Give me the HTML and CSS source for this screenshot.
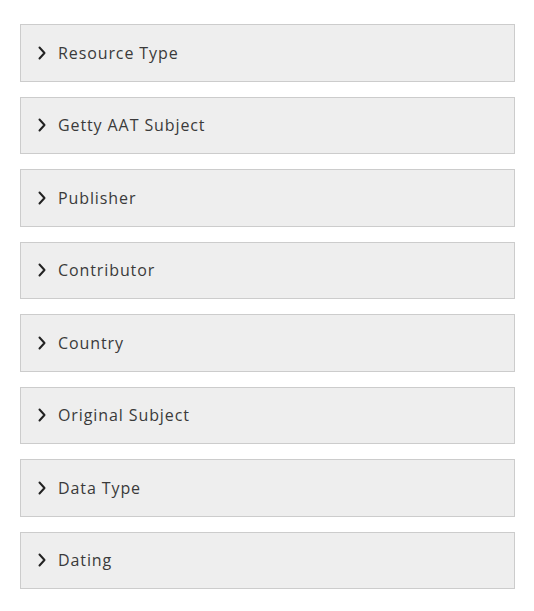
FILE: index.html
```html
<!DOCTYPE html>
<html>
<head>
<meta charset="utf-8">
<link rel="stylesheet" href="styles.css">
</head>
<body>
<div class="facets">
  <div class="facet"><svg class="chev" viewBox="0 0 10 14"><polyline points="2.5,1.5 7.5,7 2.5,12.5"/></svg><span>Resource Type</span></div>
  <div class="facet"><svg class="chev" viewBox="0 0 10 14"><polyline points="2.5,1.5 7.5,7 2.5,12.5"/></svg><span>Getty AAT Subject</span></div>
  <div class="facet"><svg class="chev" viewBox="0 0 10 14"><polyline points="2.5,1.5 7.5,7 2.5,12.5"/></svg><span>Publisher</span></div>
  <div class="facet"><svg class="chev" viewBox="0 0 10 14"><polyline points="2.5,1.5 7.5,7 2.5,12.5"/></svg><span>Contributor</span></div>
  <div class="facet"><svg class="chev" viewBox="0 0 10 14"><polyline points="2.5,1.5 7.5,7 2.5,12.5"/></svg><span>Country</span></div>
  <div class="facet"><svg class="chev" viewBox="0 0 10 14"><polyline points="2.5,1.5 7.5,7 2.5,12.5"/></svg><span>Original Subject</span></div>
  <div class="facet"><svg class="chev" viewBox="0 0 10 14"><polyline points="2.5,1.5 7.5,7 2.5,12.5"/></svg><span>Data Type</span></div>
  <div class="facet"><svg class="chev" viewBox="0 0 10 14"><polyline points="2.5,1.5 7.5,7 2.5,12.5"/></svg><span>Dating</span></div>
</div>
</body>
</html>
```

FILE: styles.css
```css
html, body {
  margin: 0;
  padding: 0;
  background: #fff;
}
.facets {
  display: flex;
  flex-direction: column;
  gap: 15px;
  padding: 24px 19px 0 20px;
  font-family: "Open Sans", "DejaVu Sans", sans-serif;
}
.facet {
  box-sizing: border-box;
  height: 57.5px;
  display: flex;
  align-items: center;
  padding-left: 16px;
  background: #eeeeee;
  border: 1px solid #cccccc;
  color: #3a3a3a;
  font-size: 16px;
  letter-spacing: 0.9px;
}
.chev {
  width: 10px;
  height: 14px;
  margin-right: 11px;
  flex: none;
}
.chev polyline {
  fill: none;
  stroke: #222;
  stroke-width: 2;
  stroke-linecap: round;
  stroke-linejoin: round;
}
```
